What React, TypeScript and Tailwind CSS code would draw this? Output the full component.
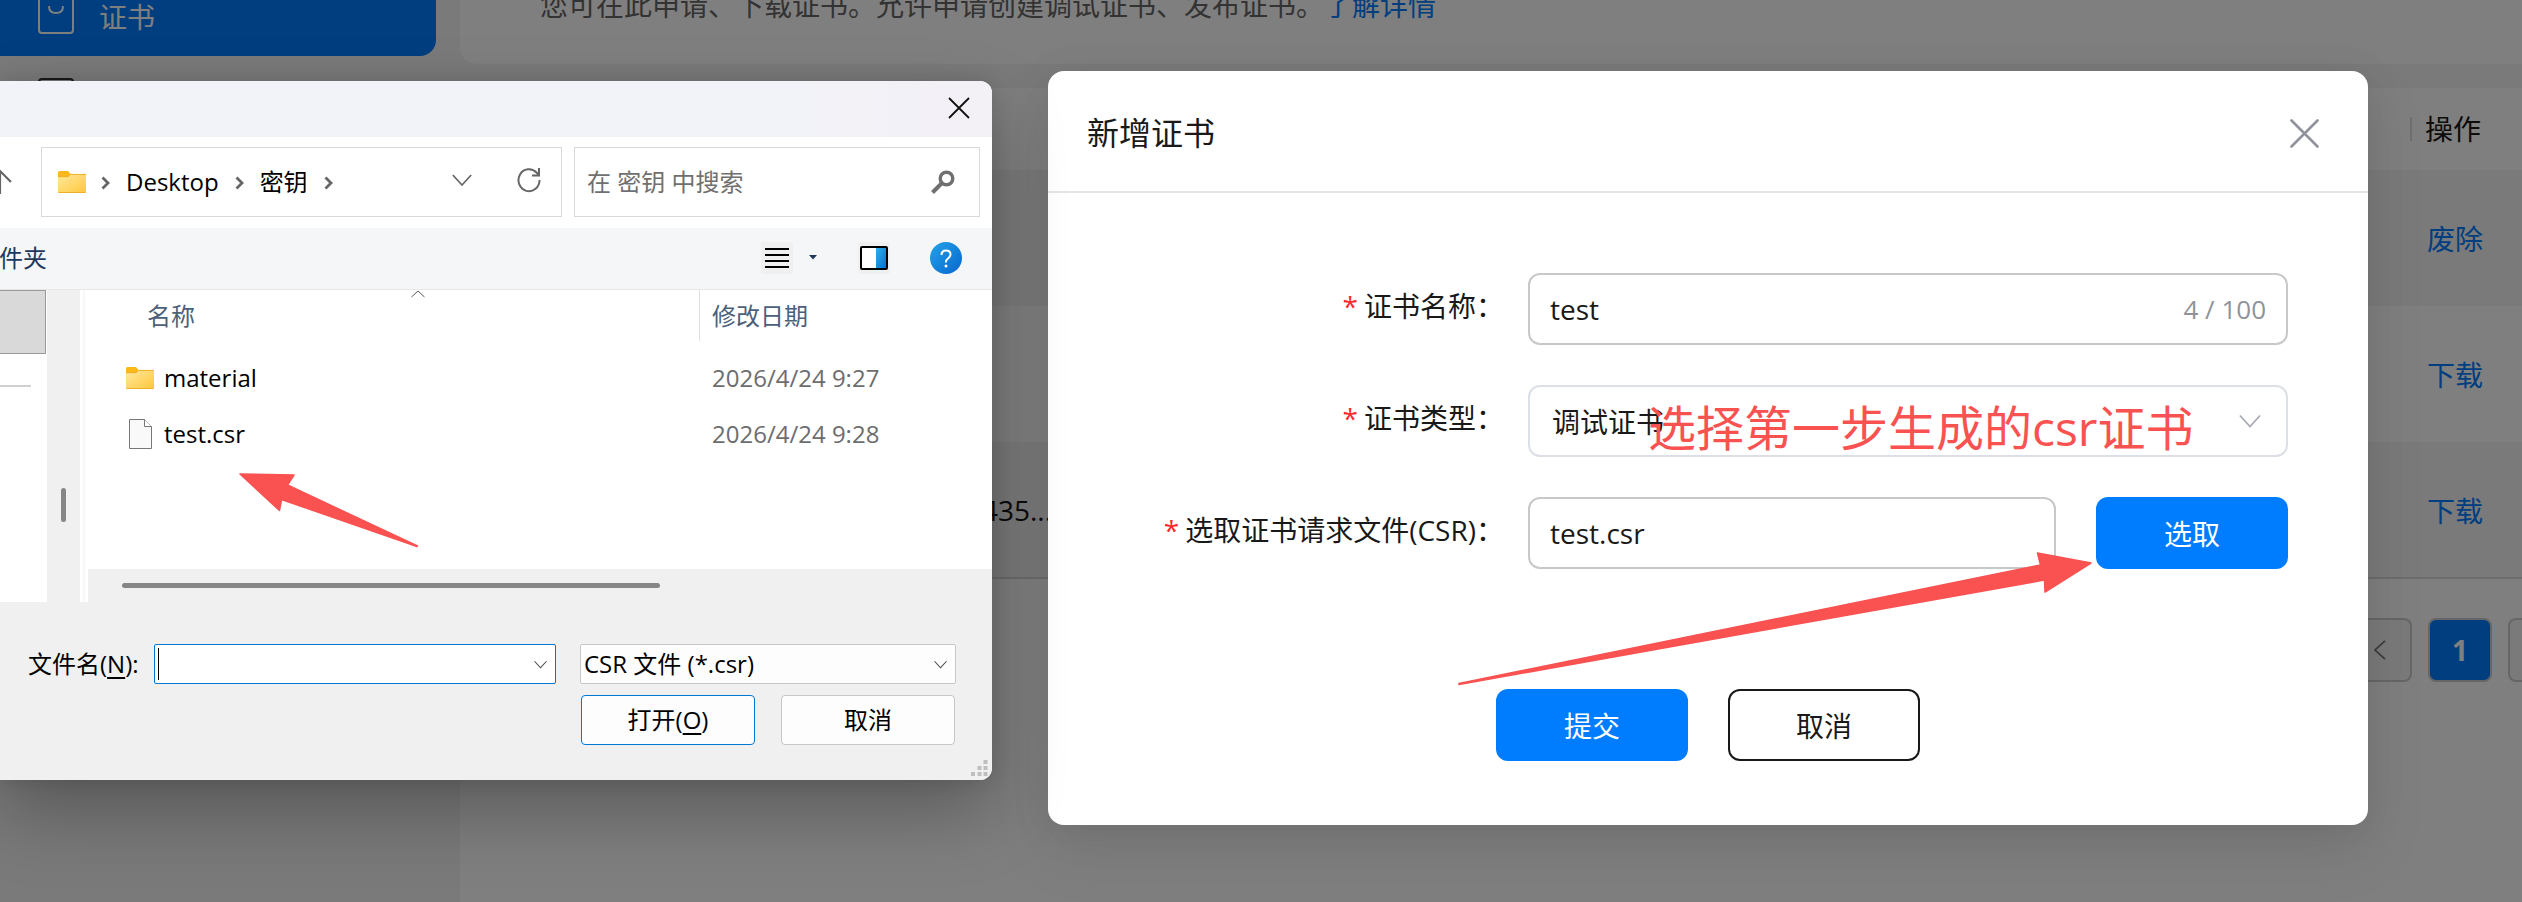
import React from "react"

const certRows = [
  { serial: "", action: "废除" },
  { serial: "", action: "下载" },
  { serial: "435...", action: "下载" },
]

const files = [
  { name: "material", date: "2026/4/24 9:27", folder: true },
  { name: "test.csr", date: "2026/4/24 9:28", folder: false },
]

function FolderIcon() {
  return (
    <svg width="28" height="22" viewBox="0 0 28 22" aria-hidden="true">
      <defs>
        <linearGradient id="folder" x1="0" y1="0" x2="1" y2="1">
          <stop offset="0" stopColor="#ffe9a0" />
          <stop offset="1" stopColor="#ffc73a" />
        </linearGradient>
      </defs>
      <path d="M0 1.5Q0 0 1.5 0H10l2.5 3V8H0z" fill="#fbb917" />
      <path d="M0 6h10l2.500-3H27q1 0 1 1v17q0 1-1 1H1q-1 0-1-1z" fill="url(#folder)" />
      <path d="M0 5.700h10L12.500 3.400H28M.5 21.500h27" fill="none" stroke="#eeb02b" />
    </svg>
  )
}

function FileIcon() {
  return (
    <svg width="23" height="30" viewBox="0 0 23 30" aria-hidden="true">
      <path d="M.5.500h15l7 7v22H.5z" fill="#f9f9f9" stroke="#777" />
      <path d="M15.500.500v7h7" fill="#fff" stroke="#777" />
    </svg>
  )
}

function Crumb() {
  return (
    <svg width="9" height="14" viewBox="0 0 9 14" className="mt-px" aria-hidden="true">
      <path d="M1.500 1.500L7 7l-5.500 5.500" fill="none" stroke="#666" strokeWidth="2.800" />
    </svg>
  )
}

function Chevron({ className, width = 12 }: { className: string; width?: number }) {
  return (
    <svg width={width} height={width} viewBox="0 0 12 12" className={className} aria-hidden="true">
      <path d="M.5 3L6 9l5.500-6" fill="none" stroke="currentColor" />
    </svg>
  )
}

function ConsolePage() {
  return (
    <div className="flex min-h-screen bg-[#f4f4f4]">
      <aside className="w-[460px] shrink-0 pr-6">
        <a href="#cert" className="flex h-14 items-start rounded-br-2xl bg-[#007dff] pl-[38px] text-[28px] leading-[34px] text-white">
          <svg width="36" height="34" viewBox="0 0 36 34" fill="none" stroke="currentColor" strokeWidth="2" aria-hidden="true">
            <path d="M1 0v30q0 3 3 3h28q3 0 3-3V0M11 6q0 7 7 7t7-7" />
          </svg>
          <span className="ml-[25px]">证书</span>
        </a>
        <svg width="36" height="36" viewBox="0 0 36 36" className="mt-[22px] ml-[38px]" aria-hidden="true">
          <rect x="1" y="1" width="34" height="34" rx="3" fill="none" stroke="#333" strokeWidth="2" />
        </svg>
      </aside>
      <main className="flex min-w-0 flex-1 flex-col gap-6">
        <div className="h-16 rounded-bl-2xl bg-white pl-20 text-[28px] text-[#666]">
          <p className="-mt-3 leading-[34px]">
            您可在此申请、下载证书。允许申请创建调试证书、发布证书。
            <a href="#more" className="text-[#007dff]">了解详情</a>
          </p>
        </div>
        <section className="flex-1 rounded-tl-2xl bg-white">
          <table className="w-full table-fixed text-left text-[28px] text-[#191919]">
            <thead>
              <tr className="h-[82px]">
                <th className="w-[592px]" />
                <th />
                <th className="w-28 font-normal">
                  <div className="flex items-center gap-[13px]">
                    <span className="h-6 w-0.5 bg-[#dedede]" />
                    操作
                  </div>
                </th>
              </tr>
            </thead>
            <tbody className="border-b-2 border-[#d9d9d9]">
              {certRows.map((row, i) => (
                <tr key={i} className="h-[136px] odd:bg-[#f4f4f4]">
                  <td className="text-right">{row.serial}</td>
                  <td />
                  <td className="pt-0.5 pl-[17px]">
                    <a href="#action" className="text-[#007dff]">{row.action}</a>
                  </td>
                </tr>
              ))}
            </tbody>
          </table>
          <nav className="mt-[39px] -mr-[50px] flex justify-end gap-4">
            <button aria-label="上一页" className="flex size-16 items-center justify-center rounded-lg border-2 border-[#ccc] bg-[#f4f4f4] text-[#777]">
              <Chevron width={20} className="rotate-90" />
            </button>
            <button className="size-16 rounded-lg border-2 border-[#ccc] bg-[#007dff] text-[28px] font-bold text-white">1</button>
            <button aria-label="下一页" className="size-16 rounded-lg border-2 border-[#ccc] bg-[#f4f4f4]" />
          </nav>
        </section>
      </main>
    </div>
  )
}

function FieldLabel({ id, children }: { id: string; children: React.ReactNode }) {
  return (
    <label htmlFor={id} className="flex h-[66px] items-center justify-end text-[28px]">
      <span className="mr-1.5 text-[#fa2a2d]">*</span>
      {children}
    </label>
  )
}

function CertModal() {
  return (
    <div className="absolute inset-0 flex items-start justify-end bg-black/50 pt-[71px] pr-[154px]">
      <div
        role="dialog"
        aria-label="新增证书"
        className="relative w-[1320px] rounded-2xl bg-white pb-16 text-[#191919] shadow-[0_24px_64px_8px_rgba(0,0,0,0.06),0_8px_40px_rgba(0,0,0,0.08)]"
      >
        <header className="flex h-[122px] items-center justify-between border-b-2 border-[#e4e4e4] pt-1 pr-[49px] pl-[39px]">
          <h2 className="text-[32px]">新增证书</h2>
          <button aria-label="关闭">
            <svg width="29" height="29" viewBox="0 0 29 29" stroke="#909399" strokeWidth="2.600" strokeLinecap="round" aria-hidden="true">
              <path d="M1.500 1.500l26 26M27.500 1.500l-26 26" />
            </svg>
          </button>
        </header>
        <form className="pt-20" onSubmit={(e) => e.preventDefault()}>
          <div className="grid grid-cols-[456px_760px] gap-x-6 gap-y-10">
            <FieldLabel id="cert-name">证书名称：</FieldLabel>
            <div className="relative flex">
              <input id="cert-name" defaultValue="test" className="h-[72px] w-full rounded-xl border-2 border-[#c8c8c8] px-5 text-[28px]" />
              <span className="absolute top-[18px] right-[22px] text-[26px] leading-9 text-[#909399]">4 / 100</span>
            </div>
            <FieldLabel id="cert-type">证书类型：</FieldLabel>
            <div className="relative flex">
              <select id="cert-type" className="h-[72px] w-full appearance-none rounded-xl border-2 border-[#dcdfe6] px-[22px] pt-0.5 text-[28px]">
                <option>调试证书</option>
              </select>
              <Chevron width={22} className="pointer-events-none absolute top-[25px] right-[27px] text-[#a8abb2]" />
            </div>
            <FieldLabel id="cert-csr">选取证书请求文件(CSR)：</FieldLabel>
            <div className="flex gap-10">
              <input id="cert-csr" defaultValue="test.csr" className="h-[72px] min-w-0 flex-1 rounded-xl border-2 border-[#c8c8c8] px-5 text-[28px]" />
              <button type="button" className="h-[72px] w-48 rounded-xl bg-[#007dff] pt-0.5 text-[28px] text-white">选取</button>
            </div>
          </div>
          <div className="mt-[120px] flex justify-center gap-10 text-[28px]">
            <button className="h-[72px] w-48 rounded-xl bg-[#007dff] pt-0.5 text-white">提交</button>
            <button type="button" className="h-[72px] w-48 rounded-xl border-2 border-[#191919] pt-0.5">取消</button>
          </div>
        </form>
        <p className="absolute top-[325px] left-[600px] text-[48px] leading-[64px] whitespace-nowrap text-[#fa5151]">
          选择第一步生成的csr证书
        </p>
        <svg width="640" height="136" viewBox="0 0 640 136" fill="#fa5151" stroke="#fa5151" strokeLinejoin="round" className="pointer-events-none absolute top-[479px] left-[408px]" aria-hidden="true">
          <path d="M3 133.500L584.500 15L581.500 3L635 13L589 42L588.500 30L3 134.500z" strokeWidth="1.500" />
        </svg>
      </div>
    </div>
  )
}

function FileDialog() {
  return (
    <div
      role="dialog"
      aria-label="打开"
      className="absolute top-[81px] left-0 w-[992px] overflow-hidden rounded-r-xl bg-white text-2xl text-black shadow-[0_32px_72px_rgba(0,0,0,0.28),0_0_20px_rgba(0,0,0,0.12)]"
    >
      <div className="flex h-14 items-center justify-end bg-linear-to-r from-[#f1f3f8] from-75% to-[#f3f0f6] pr-[22px] pb-0.5">
        <button aria-label="关闭">
          <svg width="22" height="22" viewBox="0 0 22 22" stroke="#111" strokeWidth="1.800" aria-hidden="true">
            <path d="M1 1l20 20M21 1L1 21" />
          </svg>
        </button>
      </div>

      <div className="flex h-[91px] items-center pr-3 pb-px">
        <button aria-label="上移" className="w-[41px] shrink-0">
          <svg width="26" height="26" viewBox="0 0 26 26" fill="none" stroke="#666" strokeWidth="2.200" className="-ml-[13px]" aria-hidden="true">
            <path d="M13 2v23M2 13L13 2l11 11" />
          </svg>
        </button>
        <div className="flex h-[70px] flex-1 items-center border border-[#d9d9d9] pl-4">
          <FolderIcon />
          <span className="ml-[15px]"><Crumb /></span>
          <span className="mx-4">Desktop</span>
          <Crumb />
          <span className="mx-4">密钥</span>
          <Crumb />
          <Chevron width={20} className="mr-[45px] mb-1 ml-auto text-[#666]" />
          <button aria-label="刷新" className="mr-5 pb-1">
            <svg width="24" height="26" viewBox="0 0 24 26" fill="none" stroke="#666" strokeWidth="2" aria-hidden="true">
              <path d="M22.500 13A10.500 11 0 1 1 19.500 5.500L22 8M22 1v7.500h-7" />
            </svg>
          </button>
        </div>
        <label className="ml-3 flex h-[70px] w-[406px] items-center border border-[#d9d9d9] pr-6 pl-3">
          <input aria-label="在 密钥 中搜索" placeholder="在 密钥 中搜索" className="min-w-0 flex-1 outline-none placeholder:text-[#707070]" />
          <svg width="24" height="24" viewBox="0 0 24 24" fill="none" stroke="#707070" aria-hidden="true">
            <circle cx="15.500" cy="8.500" r="6.300" strokeWidth="3.400" />
            <path d="M11 13L1.500 22.500" strokeWidth="4" />
          </svg>
        </label>
      </div>

      <div className="flex h-[62px] items-center border-b border-[#e5e7e9] bg-[#f4f6f8] pr-[30px] pb-0.5">
        <button className="-ml-px text-[#1e395b]">件夹</button>
        <button aria-label="更改视图" className="ml-auto flex items-center">
          <svg width="32" height="32" viewBox="0 0 32 32" aria-hidden="true">
            <rect width="32" height="32" rx="2" fill="#f0f0f0" />
            <path d="M4 7h24M4 13h24M4 19h24M4 25h24" stroke="#000" strokeWidth="2" />
          </svg>
          <svg width="8" height="5" viewBox="0 0 8 5" className="ml-4" aria-hidden="true">
            <path d="M0 0h8L4 4.500z" fill="#1e395b" />
          </svg>
        </button>
        <button aria-label="预览窗格" className="mr-10 ml-[41px]">
          <svg width="32" height="32" viewBox="0 0 32 32" aria-hidden="true">
            <defs>
              <linearGradient id="pane" x1="0" y1="0" x2="1" y2="1">
                <stop offset="0" stopColor="#2cb0ee" />
                <stop offset="1" stopColor="#0670cf" />
              </linearGradient>
            </defs>
            <rect width="32" height="32" rx="2" fill="#f0f0f0" />
            <rect x="3" y="5" width="26" height="22" rx="1" fill="#fff" stroke="#000" strokeWidth="2" />
            <path d="M18 6h10v20H18z" fill="url(#pane)" />
          </svg>
        </button>
        <button aria-label="帮助">
          <svg width="32" height="32" viewBox="0 0 32 32" aria-hidden="true">
            <defs>
              <linearGradient id="help" x1="0" y1="0" x2="1" y2="1">
                <stop offset="0" stopColor="#24a3e8" />
                <stop offset="1" stopColor="#0667cf" />
              </linearGradient>
            </defs>
            <circle cx="16" cy="16" r="16" fill="url(#help)" />
            <path d="M11.500 13q0-4.500 4.500-4.500t4.500 4q0 2-2.500 4t-2 4" fill="none" stroke="#fff" strokeWidth="2" />
            <circle cx="16" cy="24" r="1.500" fill="#fff" />
          </svg>
        </button>
      </div>

      <div className="flex h-[312px]">
        <div className="w-[47px]">
          <div className="h-16 w-[46px] border border-l-0 border-[#999] bg-[#d9d9d9]" />
          <div className="mt-[31px] h-0.5 w-[31px] bg-[#d0d0d0]" />
        </div>
        <div className="flex w-[33px] items-center justify-center bg-[#f0f0f0]">
          <span className="mt-[118px] h-[34px] w-[5px] rounded-full bg-[#868686]" />
        </div>
        <div className="mx-[3px] w-0.5 bg-[#f8f8f8]" />
        <div className="flex flex-1 flex-col">
          <div className="relative flex-1">
            <table className="w-full table-fixed text-left">
              <thead>
                <tr className="h-[60px] align-top text-[#4c607a]">
                  <th className="w-[612px] p-0 font-normal">
                    <div className="flex h-[51px] items-center border-r border-[#e0e0e0] pl-[59px]">名称</div>
                  </th>
                  <th className="p-0 font-normal">
                    <div className="flex h-[51px] items-center pl-3">修改日期</div>
                  </th>
                </tr>
              </thead>
              <tbody>
                {files.map((file) => (
                  <tr key={file.name} className="h-14">
                    <td className="p-0">
                      <div className="flex items-center pl-[38px]">
                        <span className="flex w-[38px] justify-start">
                          {file.folder ? <FolderIcon /> : <span className="pl-[3px]"><FileIcon /></span>}
                        </span>
                        {file.name}
                      </div>
                    </td>
                    <td className="p-0 pl-3 text-[#6d6d6d]">{file.date}</td>
                  </tr>
                ))}
              </tbody>
            </table>
            <svg width="14" height="8" viewBox="0 0 14 8" className="absolute top-0 left-[323px]" aria-hidden="true">
              <path d="M.5 7L7 1l6.500 6" fill="none" stroke="#555" />
            </svg>
            <svg width="184" height="78" viewBox="0 0 184 78" fill="#fa5151" stroke="#fa5151" strokeLinejoin="round" className="absolute top-[181px] left-[149px]" aria-hidden="true">
              <path d="M3 3L57 4L50.500 14L180.500 75L180 75.500L44.500 28.500L42.500 39.500z" strokeWidth="1.500" />
            </svg>
          </div>
          <div className="flex h-[33px] items-center bg-[#f0f0f0] pl-[34px]">
            <span className="h-[5px] w-[538px] rounded-full bg-[#868686]" />
          </div>
        </div>
      </div>

      <div className="relative bg-[#f0f0f0] pt-[42px] pr-9 pb-[35px]">
        <div className="flex h-10 items-center">
          <label htmlFor="file-name" className="w-[154px] pl-7">
            文件名(<u className="underline-offset-4">N</u>):
          </label>
          <div className="relative flex flex-1">
            <input id="file-name" className="h-10 w-full rounded-xs border border-[#0078d4] bg-white px-1" />
            <span className="absolute top-1 left-1 h-8 w-px bg-black" />
            <Chevron width={13} className="absolute top-[14px] right-[9px] text-[#444]" />
          </div>
          <div className="relative ml-6 flex w-[376px]">
            <select aria-label="文件类型" className="h-10 w-full appearance-none rounded-xs border border-[#c8c8c8] bg-[#fdfdfd] px-[3px]">
              <option>CSR 文件 (*.csr)</option>
            </select>
            <Chevron width={13} className="pointer-events-none absolute top-[14px] right-[9px] text-[#444]" />
          </div>
        </div>
        <div className="mt-[11px] flex justify-end gap-[26px] pr-px">
          <button className="h-[50px] w-[174px] rounded-sm border border-[#0078d4] bg-[#fdfdfd]">
            打开(<u className="underline-offset-4">O</u>)
          </button>
          <button className="h-[50px] w-[174px] rounded-sm border border-[#c8c8c8] bg-[#fdfdfd]">取消</button>
        </div>
        <svg width="17" height="16" viewBox="0 0 17 16" fill="#bfbfbf" className="absolute right-1 bottom-1" aria-hidden="true">
          <path d="M12.500 0h4v4h-4zM6.500 6h4v4h-4zM12.500 6h4v4h-4zM0 12h4v4H0zM6.500 12h4v4h-4zM12.500 12h4v4h-4z" />
        </svg>
      </div>
    </div>
  )
}

export default function App() {
  return (
    <div className="relative h-screen overflow-hidden font-['Open_Sans','Noto_Sans_CJK_SC',sans-serif]">
      <ConsolePage />
      <CertModal />
      <FileDialog />
    </div>
  )
}
